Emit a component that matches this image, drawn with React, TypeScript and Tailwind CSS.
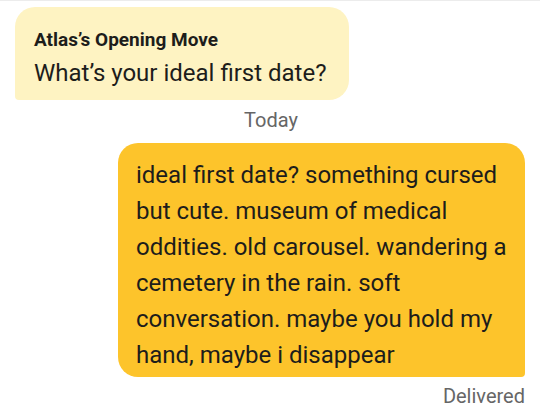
export default function App() {
  return (
    <div className="w-[540px] h-[412px] bg-white border-t border-[#ececec] overflow-hidden font-['Roboto',sans-serif] text-[#1d1d1b]">
      {/* Opening move */}
      <div className="ml-[15px] mt-[6px] w-[334px] rounded-[20px] rounded-bl-[4px] bg-[#fef3c2] pl-[19px] pr-3 pt-[23px] pb-[12px]">
        <p className="text-[19px] leading-[20px] font-bold">Atlas’s Opening Move</p>
        <p className="mt-[8px] text-[24px] leading-[30px]">What’s your ideal first date?</p>
      </div>

      <p className="mt-[8px] text-center pl-[2px] text-[20px] leading-[24px] text-[#666]">Today</p>

      {/* My message */}
      <div className="flex flex-col items-end pr-[15px] mt-[11px]">
        <div className="w-[407px] rounded-[20px] rounded-br-[4px] bg-[#fdc42b] pl-[18px] pr-3 pt-[14px] pb-[4px] text-[24px] leading-[36px]">
          ideal first date? something cursed but cute. museum of medical oddities. old carousel. wandering a cemetery in the rain. soft conversation. maybe you hold my hand, maybe i disappear
        </div>
        <p className="mt-[7px] text-[20px] leading-[24px] text-[#666]">Delivered</p>
      </div>
    </div>
  )
}
